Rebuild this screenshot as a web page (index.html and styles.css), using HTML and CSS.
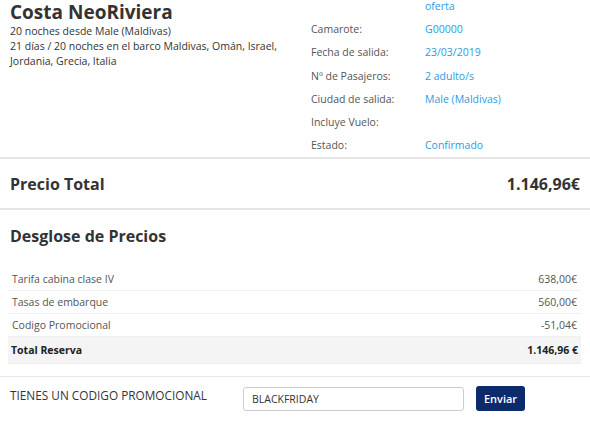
FILE: index.html
```html
<!DOCTYPE html>
<html lang="es">
<head>
  <meta charset="UTF-8" />
  <meta name="viewport" content="width=device-width, initial-scale=1.0" />
  <title>Resumen de Reserva - Costa NeoRiviera</title>
  <link rel="stylesheet" href="styles.css">
</head>
<body>
  <div class="cabecera">
    <div class="crucero">
      <h1>Costa NeoRiviera</h1>
      <p>20 noches desde Male (Maldivas)</p>
      <p>21 días / 20 noches en el barco Maldivas, Omán, Israel, Jordania, Grecia, Italia</p>
    </div>
    <div class="datos">
      <span class="etiqueta"></span><span class="valor">oferta</span>
      <span class="etiqueta">Camarote:</span><span class="valor">G00000</span>
      <span class="etiqueta">Fecha de salida:</span><span class="valor">23/03/2019</span>
      <span class="etiqueta">Nº de Pasajeros:</span><span class="valor">2 adulto/s</span>
      <span class="etiqueta">Ciudad de salida:</span><span class="valor">Male (Maldivas)</span>
      <span class="etiqueta">Incluye Vuelo:</span><span class="valor"></span>
      <span class="etiqueta">Estado:</span><span class="valor">Confirmado</span>
    </div>
  </div>

  <div class="precio-total">
    <span>Precio Total</span>
    <span>1.146,96€</span>
  </div>

  <div class="desglose">
    <h2>Desglose de Precios</h2>
    <table>
      <tr><td>Tarifa cabina clase IV</td><td>638,00€</td></tr>
      <tr><td>Tasas de embarque</td><td>560,00€</td></tr>
      <tr><td>Codigo Promocional</td><td>-51,04€</td></tr>
      <tr class="total"><td>Total Reserva</td><td>1.146,96 €</td></tr>
    </table>
  </div>

  <div class="promo">
    <span class="promo-texto">TIENES UN CODIGO PROMOCIONAL</span>
    <input type="text" value="BLACKFRIDAY" />
    <button>Enviar</button>
  </div>
</body>
</html>
```

FILE: styles.css
```css
body {
  margin: 0;
  font-family: 'Open Sans', 'Liberation Sans', sans-serif;
  color: #333;
  background: #fff;
  width: 590px;
  overflow: hidden;
}
.cabecera {
  display: flex;
  border-bottom: 2px solid #e6e6e6;
}
.crucero {
  width: 290px;
  padding-left: 10px;
}
.crucero h1 {
  margin: 0;
  font-size: 19px;
  line-height: 24px;
  font-weight: 700;
}
.crucero p {
  margin: 0;
  font-size: 10.5px;
  line-height: 15px;
}
.datos {
  display: grid;
  grid-template-columns: 114px auto;
  grid-auto-rows: 23.3px;
  align-items: center;
  margin-top: -6px;
  padding-left: 11px;
  font-size: 10.5px;
}
.etiqueta {
  color: #555;
}
.valor {
  color: #2b9be3;
}
.precio-total {
  display: flex;
  justify-content: space-between;
  align-items: center;
  height: 49px;
  padding: 0 10px;
  font-size: 16px;
  font-weight: 700;
  border-bottom: 2px solid #e6e6e6;
}
.desglose {
  padding: 0 9px 12px 8px;
  border-bottom: 1px solid #e8e8e8;
}
.desglose h2 {
  margin: 0;
  padding: 15px 2px 21px;
  font-size: 16px;
  line-height: 22px;
  font-weight: 700;
}
table {
  width: 100%;
  border-collapse: collapse;
  font-size: 10.5px;
  color: #555;
}
td {
  height: 22px;
  padding: 0 4px;
  border-bottom: 1px solid #efefef;
}
td:last-child {
  text-align: right;
}
tr.total td {
  height: 26px;
  background: #f4f4f4;
  color: #222;
  font-weight: 700;
  font-size: 10.5px;
  padding: 0 3px;
}
.promo {
  display: flex;
  align-items: center;
  padding: 9px 10px;
}
.promo-texto {
  width: 233px;
  font-size: 11.8px;
  color: #333;
  padding-bottom: 8px;
}
.promo input {
  width: 221px;
  height: 24px;
  box-sizing: border-box;
  border: 1px solid #ccc;
  border-radius: 3px;
  padding: 0 8px;
  font-family: inherit;
  font-size: 10.5px;
  color: #333;
}
.promo button {
  margin-left: 12px;
  width: 49px;
  height: 25px;
  background: #0c2a6c;
  color: #fff;
  border: none;
  border-radius: 3px;
  font-family: inherit;
  font-size: 11px;
  font-weight: 600;
  cursor: pointer;
}
```
